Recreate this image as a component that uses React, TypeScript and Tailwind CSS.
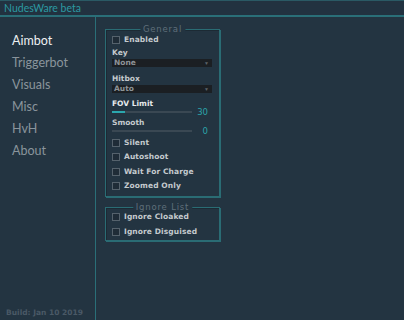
const tabs = ["Aimbot", "Triggerbot", "Visuals", "Misc", "HvH", "About"];

const ui = "font-['DejaVu_Sans',sans-serif] font-bold text-[7.5px] leading-none";

function Check({ label, className = "" }: { label: string; className?: string }) {
  return (
    <div className={`flex h-[10px] items-center gap-[4px] ${className}`}>
      <span className="h-[8px] w-[8px] border border-[#55626c] bg-[#1f2c37]" />
      <span className={`${ui} tracking-[0.1px] text-[#c5cace]`}>{label}</span>
    </div>
  );
}

function Label({ text, className = "", bright = false }: { text: string; className?: string; bright?: boolean }) {
  return (
    <div className={`flex h-[10px] items-center ${className}`}>
      <span className={`${ui} ${bright ? "text-[#e6e9eb]" : "text-[#c5cace]"}`}>{text}</span>
    </div>
  );
}

function Combo({ value, className = "" }: { value: string; className?: string }) {
  return (
    <div className={`mr-[7px] flex h-[8px] items-center justify-between bg-[#1b1f23] pl-[2px] pr-[3px] ${className}`}>
      <span className={`${ui} text-[#8d9398]`}>{value}</span>
      <span className="text-[5px] leading-none text-[#5c6369]">▼</span>
    </div>
  );
}

function Slider({ value, pct, className = "" }: { value: string; pct: number; className?: string }) {
  return (
    <div className={`flex h-[6px] items-center gap-[4px] ${className}`}>
      <div className="h-[2px] w-[80px] bg-[#3a4853]">
        <div className="h-full bg-[#2ba7ae]" style={{ width: `${pct}%` }} />
      </div>
      <span className="w-[12px] text-right font-['DejaVu_Sans',sans-serif] text-[8.5px] leading-none text-[#2ba3a9]">
        {value}
      </span>
    </div>
  );
}

function Group({ title, children, className = "" }: { title: string; children: React.ReactNode; className?: string }) {
  return (
    <div
      className={`relative w-[115px] border border-[#2a6c74] pl-[6px] shadow-[1px_1px_0_#2a6c74,inset_1px_1px_0_#1c2a34] ${className}`}
    >
      <span className="absolute left-1/2 top-[-5px] -translate-x-1/2 whitespace-nowrap bg-[#233441] px-[3px] font-['DejaVu_Sans',sans-serif] text-[8.5px] leading-none tracking-[0.8px] text-[#5f6f7a]">
        {title}
      </span>
      {children}
    </div>
  );
}

export default function App() {
  return (
    <div className="flex h-[320px] w-[404px] flex-col overflow-hidden bg-[#233441]">
      <div className="flex h-[17px] shrink-0 items-center border-t border-b-2 border-t-[#2a5964] border-b-[#2a6f78] bg-[#223240] pl-[4px]">
        <span className="font-['Lato',sans-serif] text-[10.5px] leading-none text-[#2c9aa2]">
          NudesWare beta
        </span>
      </div>
      <div className="flex min-h-0 flex-1">
        <div className="flex w-[96px] shrink-0 flex-col justify-between border-r border-[#2a6f78] pt-[13px] pb-[4px]">
          <div className="flex flex-col">
            {tabs.map((t, i) => (
              <div
                key={t}
                className={`flex h-[22px] items-center pl-[12px] font-['Lato',sans-serif] text-[12.5px] leading-none ${
                  i === 0 ? "text-[#eef0f2]" : "text-[#8a949c]"
                }`}
              >
                {t}
              </div>
            ))}
          </div>
          <span className={`${ui} pl-[6px] text-[#4a5966]`}>Build: Jan 10 2019</span>
        </div>
        <div className="flex flex-col pt-[12px] pl-[9px]">
          <Group title="General" className="pt-[5px] pb-[5px]">
            <Check label="Enabled" />
            <Label text="Key" className="mt-[3px]" />
            <Combo value="None" className="mt-[1px]" />
            <Label text="Hitbox" className="mt-[7px]" />
            <Combo value="Auto" className="mt-[1px]" />
            <Label text="FOV Limit" bright className="mt-[6px] h-[9px]" />
            <Slider value="30" pct={16} />
            <Label text="Smooth" className="mt-[3px] h-[9px]" />
            <Slider value="0" pct={0} />
            <Check label="Silent" className="mt-[4px]" />
            <Check label="Autoshoot" className="mt-[4px]" />
            <Check label="Wait For Charge" className="mt-[5px]" />
            <Check label="Zoomed Only" className="mt-[4px]" />
          </Group>
          <Group title="Ignore List" className="mt-[10px] pt-[4px] pb-[3px]">
            <Check label="Ignore Cloaked" />
            <Check label="Ignore Disguised" className="mt-[5px]" />
          </Group>
        </div>
      </div>
    </div>
  );
}
